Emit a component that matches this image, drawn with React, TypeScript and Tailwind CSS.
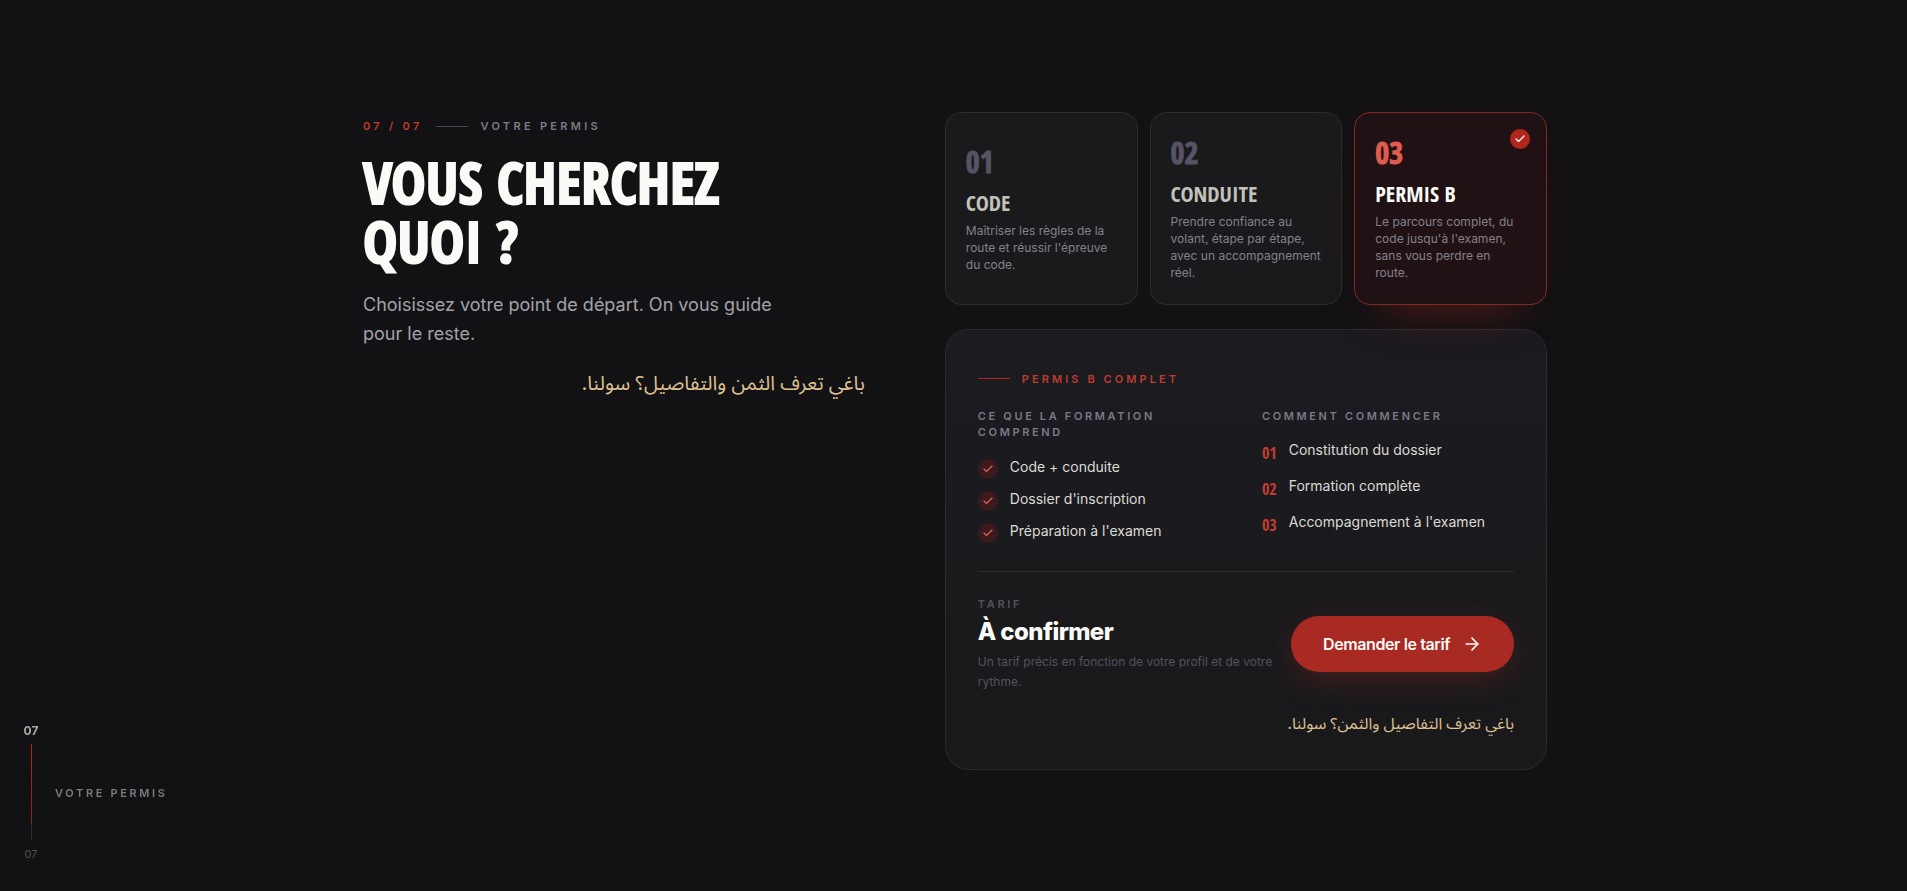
import { useState } from 'react';
import { ArrowRight, Check } from 'lucide-react';
import clsx from 'clsx';

type Offer = {
  id: string;
  number: string;
  title: string;
  text: string;
};

const OFFERS: Offer[] = [
  {
    id: 'code',
    number: '01',
    title: 'Code',
    text: "Maîtriser les règles de la route et réussir l'épreuve du code.",
  },
  {
    id: 'conduite',
    number: '02',
    title: 'Conduite',
    text: 'Prendre confiance au volant, étape par étape, avec un accompagnement réel.',
  },
  {
    id: 'permis-b',
    number: '03',
    title: 'Permis B',
    text: "Le parcours complet, du code jusqu'à l'examen, sans vous perdre en route.",
  },
];

const INCLUDED = ['Code + conduite', "Dossier d'inscription", "Préparation à l'examen"];

const STEPS = ['Constitution du dossier', 'Formation complète', "Accompagnement à l'examen"];

function OfferCard({ offer, active, onSelect }: { offer: Offer; active: boolean; onSelect: () => void }) {
  return (
    <button
      type="button"
      aria-pressed={active}
      onClick={onSelect}
      className={clsx(
        'relative flex aspect-square flex-col justify-center rounded-2xl border px-5 text-left',
        active
          ? 'border-[#7f2a29] bg-[#201214] shadow-[0_32px_40px_-32px_rgba(168,41,34,0.5),0_0_80px_rgba(168,41,34,0.05)]'
          : 'border-[#2c2c2f] bg-[#1a1a1c]',
      )}
    >
      {active && (
        <span className="absolute top-4 right-4 flex size-5 items-center justify-center rounded-full bg-[#b3261e] text-white">
          <Check className="size-3" strokeWidth={2.5} />
        </span>
      )}
      <span
        className={clsx(
          "font-['Open_Sans_Condensed','Roboto_Condensed',sans-serif] text-[30px] leading-9 font-extrabold [-webkit-text-stroke:1px_currentColor]",
          active ? 'text-[#df5c4e]' : 'text-[#565464]',
        )}
      >
        {offer.number}
      </span>
      <span
        className={clsx(
          "mt-2 font-['Open_Sans_Condensed','Roboto_Condensed',sans-serif] text-[22px] leading-7 font-bold uppercase",
          active ? 'text-[#fafaf7]' : 'text-[#c3c1bb]',
        )}
      >
        {offer.title}
      </span>
      <span className="mt-1.5 text-xs leading-[17px] text-[#83818d]">{offer.text}</span>
    </button>
  );
}

function DetailPanel() {
  return (
    <div className="mt-6 rounded-3xl border border-[#2b2b2f] bg-linear-to-b from-[#1c1b20] to-[#19191b] px-8 pt-10 pb-8">
      <div className="flex items-center gap-3">
        <span className="h-px w-8 bg-[#a82922]" />
        <h2 className="text-[11px] leading-[18px] font-semibold tracking-[0.28em] text-[#be3b30] uppercase">
          Permis B complet
        </h2>
      </div>

      <div className="mt-5 grid grid-cols-2 gap-8">
        <div>
          <h3 className="text-[11px] leading-4 font-semibold tracking-[0.24em] text-[#7c7a88] uppercase">
            Ce que la formation comprend
          </h3>
          <ul className="mt-4 space-y-[9px]">
            {INCLUDED.map((item) => (
              <li key={item} className="flex items-start gap-3 text-sm leading-[22px] text-[#dcdad5]">
                <span className="mt-[3px] flex size-5 items-center justify-center rounded-full bg-[#3a1a1c] text-[#d9604f]">
                  <Check className="size-3" strokeWidth={2.5} />
                </span>
                {item}
              </li>
            ))}
          </ul>
        </div>
        <div>
          <h3 className="text-[11px] leading-4 font-semibold tracking-[0.24em] text-[#7c7a88] uppercase">
            Comment commencer
          </h3>
          <ol className="mt-4 space-y-3">
            {STEPS.map((step, i) => (
              <li key={step} className="flex items-start gap-3 text-sm leading-5 text-[#dcdad5]">
                <span className="mt-[3px] font-['Open_Sans_Condensed','Roboto_Condensed',sans-serif] text-base leading-[21px] font-extrabold text-[#c43d31]">
                  0{i + 1}
                </span>
                {step}
              </li>
            ))}
          </ol>
        </div>
      </div>

      <div className="mt-7 flex items-center justify-between gap-4 border-t border-[#2d2d31] pt-6">
        <div>
          <p className="text-[11px] leading-4 font-semibold tracking-[0.24em] text-[#54525f] uppercase">Tarif</p>
          <p className="mt-1 text-2xl leading-8 font-extrabold tracking-tight text-[#fafaf7]">À confirmer</p>
          <p className="mt-1 text-xs leading-5 text-[#54525f]">
            Un tarif précis en fonction de votre profil et de votre rythme.
          </p>
        </div>
        <button
          type="button"
          className="flex h-14 shrink-0 items-center gap-3 rounded-full bg-[#a82a22] px-8 text-base font-semibold tracking-tight text-[#fafaf7] shadow-[0_8px_32px_-4px_rgba(168,41,34,0.35)]"
        >
          Demander le tarif
          <ArrowRight className="size-5" />
        </button>
      </div>

      <p
        dir="rtl"
        lang="ar"
        className="mt-5 font-['Noto_Sans_Arabic','DejaVu_Sans',sans-serif] text-base leading-[25px] text-[#dcc091]"
      >
        باغي تعرف التفاصيل والثمن؟ سولنا.
      </p>
    </div>
  );
}

function Progress() {
  return (
    <aside className="fixed bottom-[29px] left-[23px] flex items-center gap-4">
      <div className="flex w-4 flex-col items-center">
        <span className="text-xs leading-4 font-bold text-[#a9a8a7]">07</span>
        <span className="mt-[5px] flex h-24 w-px flex-col bg-[#2d2d31]">
          <span className="h-20 w-px bg-linear-to-b from-[#b3261e] to-[#8a241f]" />
        </span>
        <span className="mt-[6px] text-[11px] leading-4 text-[#54535a]">07</span>
      </div>
      <span className="text-[11px] leading-4 font-semibold tracking-[0.24em] text-[#7c7b80] uppercase">
        Votre permis
      </span>
    </aside>
  );
}

export default function App() {
  const [selected, setSelected] = useState('permis-b');

  return (
    <main className="min-h-screen bg-[#121214] py-28 pl-[3px] font-['Inter',sans-serif] text-[#fafaf7]">
      <section className="mx-auto grid max-w-[1184px] grid-cols-[5fr_6fr] gap-20">
        <div>
          <div className="mt-1 flex items-center gap-[13px] text-[11px] leading-5 font-semibold tracking-[0.3em] uppercase">
            <span className="text-[#be3b30]">07 / 07</span>
            <span className="h-px w-8 bg-[#48474f]" />
            <span className="text-[#7c7a88]">Votre permis</span>
          </div>
          <h1 className="mt-4 max-w-96 font-['Open_Sans_Condensed','Roboto_Condensed',sans-serif] text-[58px] leading-[59px] font-extrabold uppercase [-webkit-text-stroke:2px_currentColor]">
            Vous cherchez quoi ?
          </h1>
          <p className="mt-5 max-w-md text-lg leading-[29px] text-[#a3a2ab]">
            Choisissez votre point de départ. On vous guide pour le reste.
          </p>
          <p
            dir="rtl"
            lang="ar"
            className="mt-4 font-['Noto_Sans_Arabic','DejaVu_Sans',sans-serif] text-xl leading-10 text-[#dcc091]"
          >
            باغي تعرف الثمن والتفاصيل؟ سولنا.
          </p>
        </div>

        <div>
          <div className="grid grid-cols-3 gap-3">
            {OFFERS.map((offer) => (
              <OfferCard
                key={offer.id}
                offer={offer}
                active={offer.id === selected}
                onSelect={() => setSelected(offer.id)}
              />
            ))}
          </div>
          <DetailPanel />
        </div>
      </section>

      <Progress />
    </main>
  );
}
